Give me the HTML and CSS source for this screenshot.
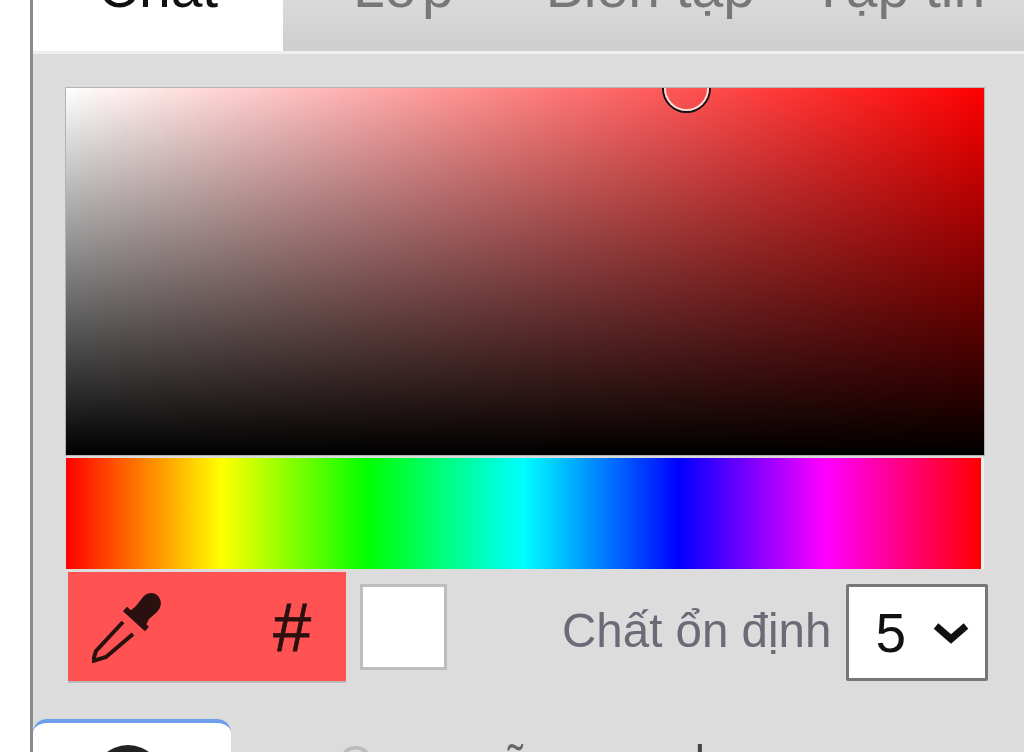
FILE: index.html
```html
<!DOCTYPE html>
<html lang="vi">
<head>
<meta charset="utf-8">
<title>Chất</title>
<link rel="stylesheet" href="styles.css">
</head>
<body>
<div class="panel">
  <div class="tabs">
    <div class="tab active">Chất</div>
    <div class="tab t2">Lớp</div>
    <div class="tab t3">Biên tập</div>
    <div class="tab t4">Tập tin</div>
  </div>
  <div class="picker">
    <div class="sv">
      <div class="thumb"></div>
    </div>
    <div class="hue"></div>
    <div class="controls">
      <div class="swatch">
        <svg class="dropper" viewBox="0 0 70 72" width="70" height="72">
          <path d="M33 18 L55 38" stroke="#2b1010" stroke-width="6" fill="none"/>
          <path d="M38 20 L44 15 L51 6 C55 1 63 1 66 5 C70 9 70 16 65 21 L57 28 L54 34 Z" fill="#2b1010"/>
          <path d="M31 31 L4 60 L1 70 L14 66 L41 43" stroke="#2b1010" stroke-width="4" fill="none"/>
        </svg>
        <span class="hash">#</span>
      </div>
      <div class="hex"></div>
      <label class="stable">Chất ổn định</label>
      <div class="select"><span>5</span>
        <svg class="chev" viewBox="0 0 36 24" width="36" height="24"><path d="M3 5 L18 18 L33 5" stroke="#111" stroke-width="7" fill="none"/></svg>
      </div>
    </div>
  </div>
  <div class="bottom">
    <div class="btab"><span class="ball"></span></div>
    <div class="peek">
      <span class="p1">C</span>
      <span class="p2">õ</span>
      <span class="p3">l</span>
    </div>
  </div>
</div>
</body>
</html>
```
FILE: styles.css
```css
html, body { margin: 0; padding: 0; height: 752px; overflow: hidden; background: #fff; }
body { font-family: "Liberation Sans", Arial, sans-serif; padding-left: 30px; box-sizing: border-box; }
.panel { height: 752px; background: #dcdcdc; border-left: 3px solid #8c8c8c; overflow: hidden; display: flex; flex-direction: column; filter: blur(0.7px); }
.tabs { height: 54px; flex: none; display: flex; background: linear-gradient(#dadada, #cfcfcf 90%); border-bottom: 3px solid #efefef; box-sizing: border-box; overflow: hidden; }
.tab { font-size: 57px; line-height: 50px; margin-top: -38px; color: #777; flex: none; }
.tab.active { width: 250px; height: 100px; background: #fff; color: #111; text-align: center; }
.t2 { margin-left: 70px; }
.t3 { margin-left: 92px; }
.t4 { margin-left: 56px; }
.picker { padding: 33px 39px 0 32px; }
.sv { position: relative; height: 367px; border: 1px solid #b4b4b4; overflow: hidden; background: linear-gradient(to bottom, rgba(0,0,0,0), #000), linear-gradient(to right, #fff, #f00); }
.thumb { position: absolute; left: 598px; top: -22px; width: 45px; height: 45px; border-radius: 50%; border: 2px solid #ffd9d9; box-shadow: 0 0 0 2px #111; box-sizing: border-box; }
.hue { margin-top: 2px; height: 111px; width: 915px; margin-left: 1px; background: linear-gradient(to right, #f00, #ff0 17%, #0f0 33%, #0ff 50%, #00f 67%, #f0f 83%, #f00); border-right: 3px solid #efefef; }
.controls { display: flex; margin-top: 3px; align-items: flex-start; padding-left: 3px; }
.swatch { flex: none; width: 278px; height: 111px; background: #ff5252; box-sizing: border-box; display: flex; align-items: center; padding: 0 35px 0 24px; justify-content: space-between; border-bottom: 2px solid #bbb; }
.dropper { flex: none; }
.hash { font-size: 68px; color: #2b1010; line-height: 1; -webkit-text-stroke: 0.8px #2b1010; }
.hex { flex: none; width: 87px; height: 86px; margin: 12px 0 0 14px; background: #fff; border: 3px solid #bdbdbd; box-sizing: border-box; }
.stable { flex: none; margin: 29px 0 0 115px; font-size: 47.5px; line-height: 60px; color: #6b6b78; white-space: nowrap; }
.select { width: 142px; height: 97px; margin: 12px 0 0 15px; box-sizing: border-box; background: #fff; border: 3px solid #777; border-radius: 2px; display: flex; align-items: center; justify-content: space-between; padding: 0 16px 0 26px; font-size: 55px; color: #111; flex: none; }
.bottom { margin-top: 36px; display: flex; }
.btab { width: 198px; height: 60px; background: #fff; border-top: 4px solid #6d9eeb; border-radius: 14px 14px 0 0; box-sizing: border-box; display: flex; justify-content: center; flex: none; }
.ball { width: 70px; height: 70px; border-radius: 50%; background: #222; margin: 22px 8px 0 0; flex: none; }
.peek { margin: 20px 0 0 107px; font-size: 46px; line-height: 46px; color: #666; display: flex; white-space: nowrap; }
.p1 { color: #bbb; }
.p2 { margin-left: 131px; }
.p3 { margin-left: 167px; color: #444; }
```
